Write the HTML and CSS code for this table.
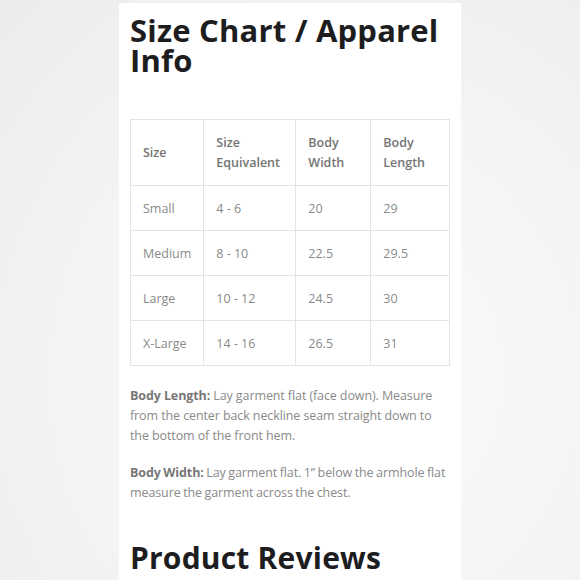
FILE: index.html
```html
<!DOCTYPE html>
<html>
<head>
<meta charset="utf-8">
<link rel="stylesheet" href="styles.css">
</head>
<body>
<main class="card">
  <h1 class="title">Size Chart / Apparel Info</h1>
  <table class="chart">
    <thead>
      <tr><th class="c1">Size</th><th class="c2">Size Equivalent</th><th class="c3">Body Width</th><th class="c4">Body Length</th></tr>
    </thead>
    <tbody>
      <tr><td>Small</td><td>4 - 6</td><td>20</td><td>29</td></tr>
      <tr><td>Medium</td><td>8 - 10</td><td>22.5</td><td>29.5</td></tr>
      <tr><td>Large</td><td>10 - 12</td><td>24.5</td><td>30</td></tr>
      <tr><td>X-Large</td><td>14 - 16</td><td>26.5</td><td>31</td></tr>
    </tbody>
  </table>
  <p class="note"><strong>Body Length:</strong> Lay garment flat (face down). Measure from the center back neckline seam straight down to the bottom of the front hem.</p>
  <p class="note note-tight"><strong>Body Width:</strong> Lay garment flat. 1” below the armhole flat measure the garment across the chest.</p>
  <h2 class="title reviews">Product Reviews</h2>
</main>
</body>
</html>
```
FILE: styles.css
```css
html, body {
  margin: 0;
  height: 100%;
}
body {
  background: radial-gradient(ellipse at 60% 65%, #fbfbfb 0%, #f4f4f4 55%, #ececec 100%);
  font-family: "Open Sans", "DejaVu Sans", sans-serif;
  overflow: hidden;
}
.card {
  box-sizing: border-box;
  width: 342px;
  height: 577px;
  margin: 3px auto 0;
  background: #fff;
  padding: 12px 11px 0;
  overflow: hidden;
}
.title {
  margin: 0;
  font-size: 31px;
  line-height: 30px;
  font-weight: 700;
  color: #1d1d1f;
  letter-spacing: 0.2px;
}
.chart {
  margin-top: 44px;
  width: 320px;
  border-collapse: collapse;
  font-size: 12.5px;
}
.chart th, .chart td {
  border: 1px solid #e4e4e4;
  text-align: left;
  padding: 0 12px;
  vertical-align: middle;
}
.chart th {
  height: 65px;
  font-weight: 600;
  color: #747474;
  line-height: 20px;
}
.chart td {
  height: 44px;
  color: #8a8a8a;
}
.c1 { width: 48px; }
.c2 { width: 67px; }
.c3 { width: 50px; }
.chart .c4 { width: auto; }
.note {
  margin: 20px 0 0;
  font-size: 12.5px;
  line-height: 20px;
  color: #8a8a8a;
  letter-spacing: -0.1px;
}
.note-tight {
  word-spacing: -0.6px;
}
.note + .note { margin-top: 17px; }
.note strong {
  color: #777;
  font-weight: 700;
}
.reviews {
  margin-top: 40px;
  font-size: 30px;
}
```
